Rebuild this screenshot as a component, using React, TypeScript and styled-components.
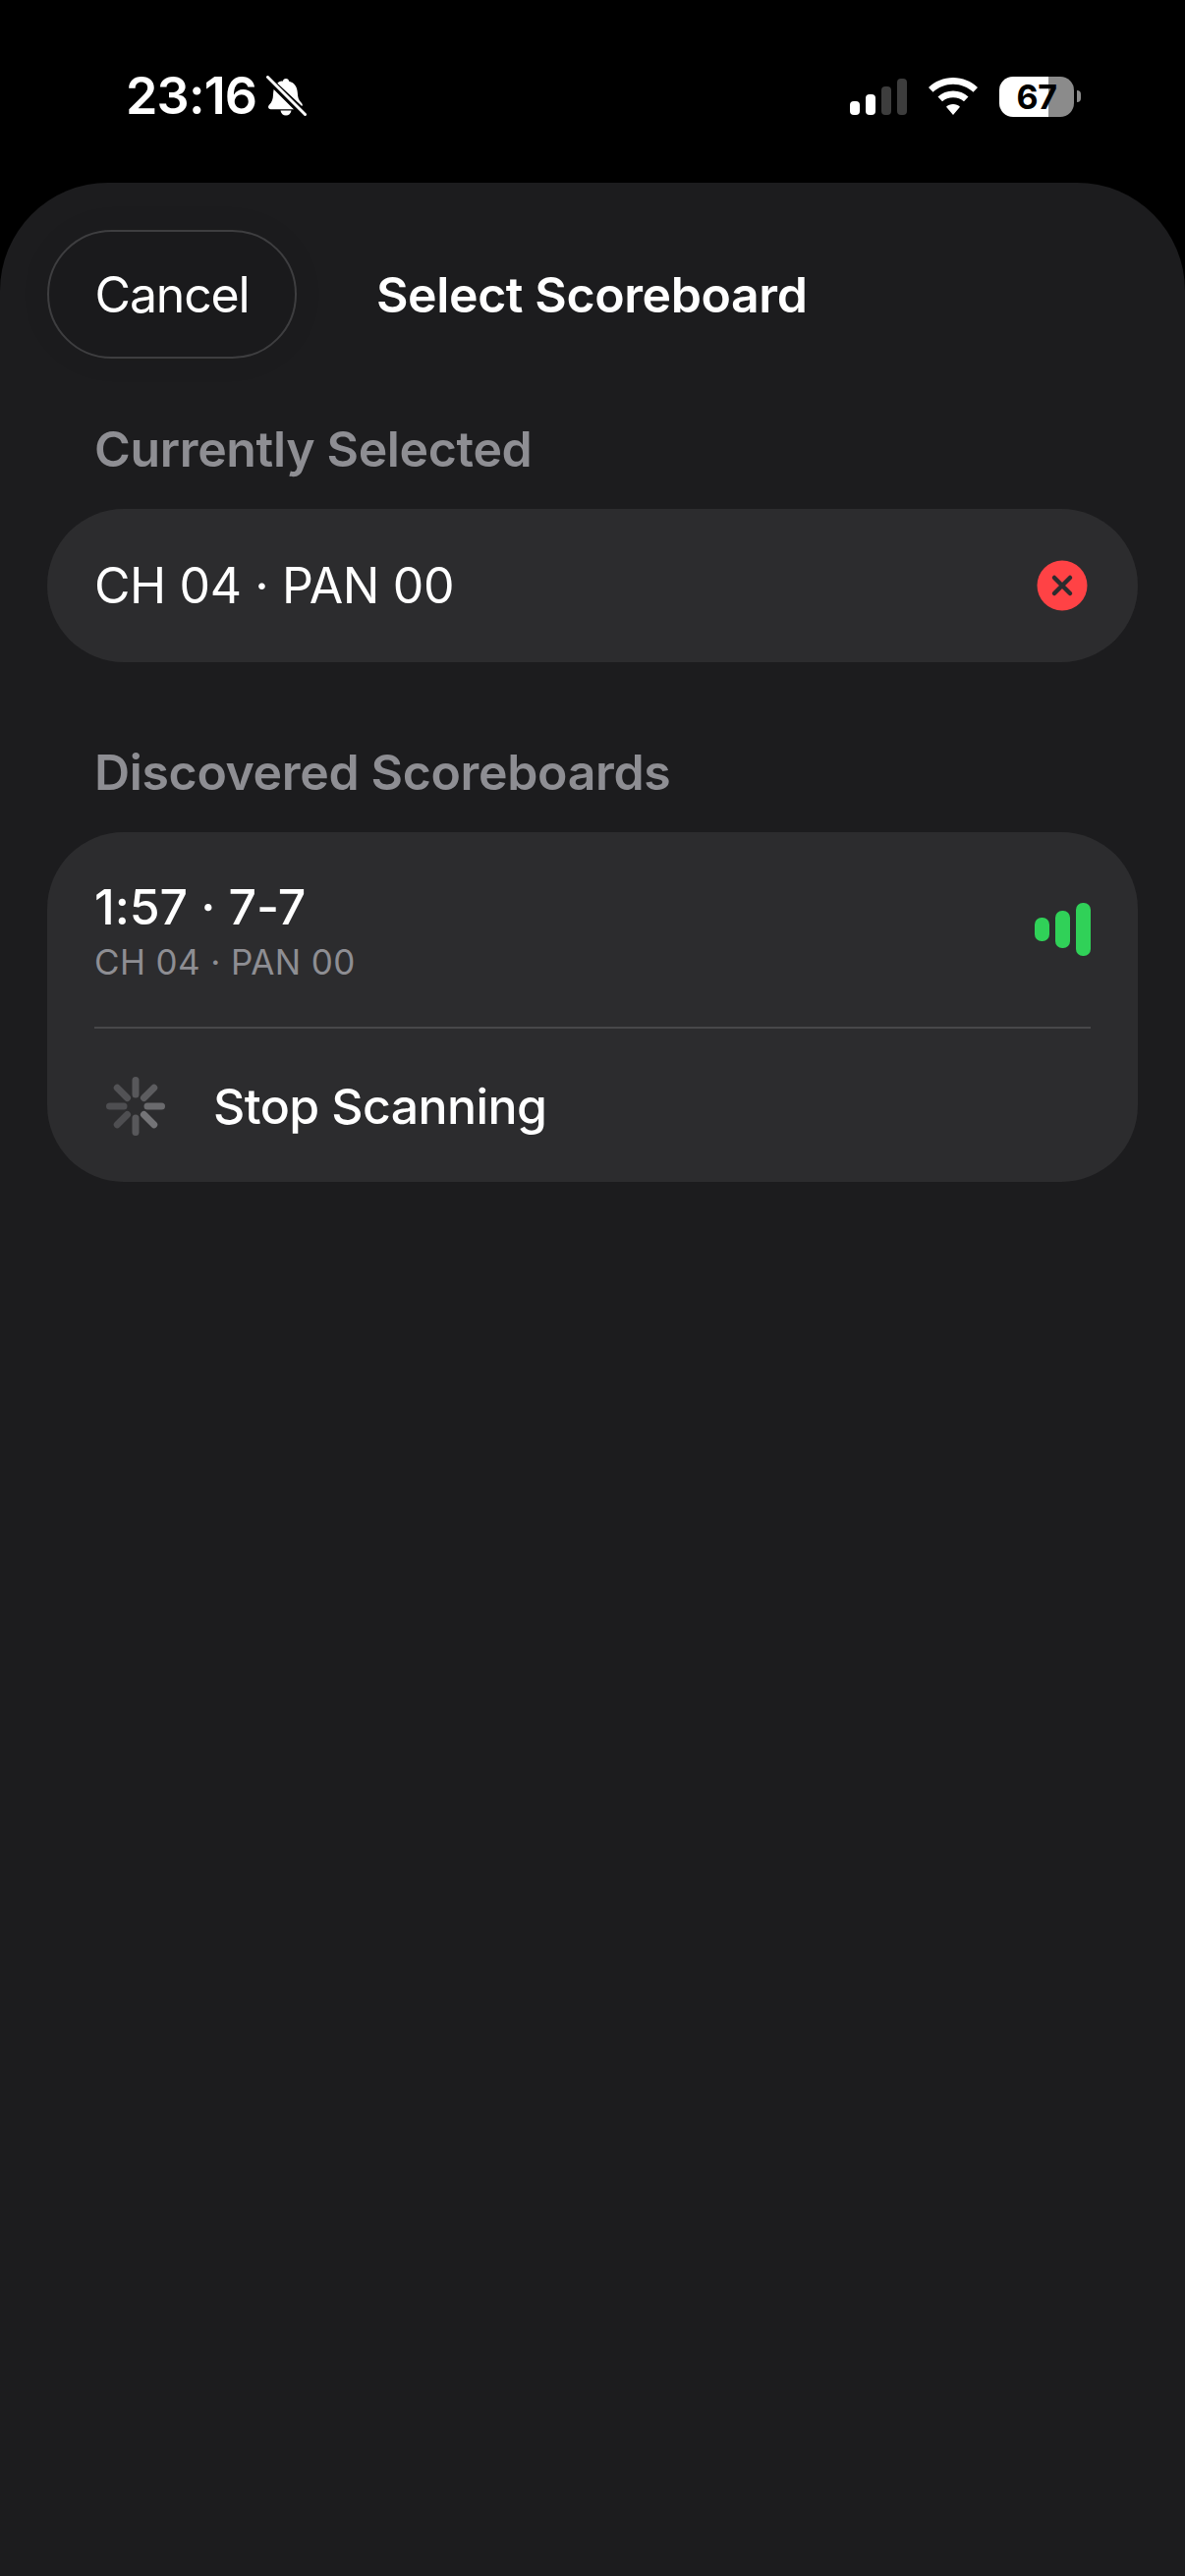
import React, { FC } from "react";
import styled, { createGlobalStyle } from "styled-components";

const GlobalStyle = createGlobalStyle`
  html, body {
    margin: 0;
    padding: 0;
    background: #000;
  }
  * {
    box-sizing: border-box;
  }
`;

const Page = styled.div`
  width: 1206px;
  height: 2622px;
  display: flex;
  flex-direction: column;
  overflow: hidden;
  background: #000;
  color: #fff;
  font-family: Inter, "Noto Sans", "Liberation Sans", sans-serif;
`;

const StatusBar = styled.div`
  height: 186px;
  flex: none;
  display: flex;
  justify-content: space-between;
  align-items: flex-start;
  padding: 70px 106px 0 128px;
`;

const StatusLeft = styled.div`
  display: flex;
  align-items: center;
  gap: 9px;
  height: 56px;
`;

const Clock = styled.span`
  font-size: 52px;
  line-height: 56px;
  font-weight: 600;
  letter-spacing: -0.8px;
`;

const StatusRight = styled.div`
  display: flex;
  align-items: center;
  height: 56px;
`;

const SignalBars = styled.div`
  display: flex;
  align-items: flex-end;
  gap: 6px;
  height: 37px;
  margin-right: 22px;
`;

const SignalBar = styled.span<{ $height: number; $on: boolean }>`
  width: 10px;
  height: ${(p) => p.$height}px;
  border-radius: 4px;
  background: ${(p) => (p.$on ? "#fff" : "#3d3d3d")};
`;

const Battery = styled.div`
  width: 76px;
  height: 41px;
  margin-left: 22px;
  border-radius: 14px;
  overflow: hidden;
  background: linear-gradient(to right, #fff 0 50px, #8b8b8b 50px);
  color: #000;
  font-size: 34px;
  font-weight: 700;
  line-height: 41px;
  text-align: center;
  letter-spacing: -0.5px;
`;

const BatteryCap = styled.span`
  width: 4px;
  height: 12px;
  margin-left: 3px;
  border-radius: 0 6px 6px 0;
  background: #8b8b8b;
`;

const Sheet = styled.div`
  flex: 1;
  display: flex;
  flex-direction: column;
  padding: 48px 48px 0;
  background: #1c1c1e;
  border-radius: 110px 110px 0 0;
`;

const NavBar = styled.div`
  display: flex;
  align-items: center;
  gap: 81px;
  margin-bottom: 62px;
`;

const CancelButton = styled.div`
  width: 254px;
  height: 131px;
  display: flex;
  align-items: center;
  justify-content: center;
  border: 2px solid #3e3e40;
  border-radius: 66px;
  background: #1a1a1c;
  box-shadow: 0 0 30px rgba(0, 0, 0, 0.08);
  font-size: 50px;
  letter-spacing: -1.2px;
`;

const Title = styled.div`
  font-size: 50px;
  font-weight: 600;
  letter-spacing: -0.4px;
`;

const SectionLabel = styled.div`
  height: 60px;
  line-height: 60px;
  padding-left: 48px;
  color: #8e8e93;
  font-size: 50px;
  font-weight: 600;
  letter-spacing: -0.35px;
`;

const Card = styled.div`
  margin-top: 31px;
  border-radius: 78px;
  background: #2c2c2e;
`;

const SelectedCard = styled(Card)`
  height: 156px;
  margin-bottom: 82px;
  display: flex;
  align-items: center;
  justify-content: space-between;
  padding: 0 51px 0 48px;
  font-size: 50px;
  letter-spacing: -0.4px;
`;

const ScoreRow = styled.div`
  height: 198px;
  display: flex;
  align-items: center;
  justify-content: space-between;
  padding: 0 48px;
`;

const ScoreText = styled.div`
  display: flex;
  flex-direction: column;
  gap: 5px;
`;

const ScoreTitle = styled.div`
  font-size: 50px;
  line-height: 60px;
  font-weight: 500;
  letter-spacing: -0.1px;
`;

const ScoreSub = styled.div`
  color: #8e8e93;
  font-size: 35px;
  line-height: 42px;
  letter-spacing: 0.4px;
`;

const Divider = styled.div`
  height: 2px;
  margin: 0 48px;
  background: #48484a;
`;

const ScanRow = styled.div`
  height: 156px;
  display: flex;
  align-items: center;
  gap: 49px;
  padding-left: 60px;
  padding-top: 1px;
  font-size: 50px;
  font-weight: 500;
  letter-spacing: -0.6px;
`;

const GreenBars = styled.div`
  display: flex;
  align-items: center;
  gap: 6px;
`;

const GreenBar = styled.span<{ $height: number }>`
  width: 15px;
  height: ${(p) => p.$height}px;
  border-radius: 7px;
  background: #30d158;
`;

const BellOff: FC = () => (
  <svg width="42" height="42" viewBox="0 0 42 42">
    <path
      fill="#fff"
      d="M21 3c1.800 0 3 1.200 3.200 2.800 5.600 1.400 8.300 5.900 8.600 11.500.2 4.600 1 7.600 4 10.500.6.6 1 1.200 1 2 0 .5-.2 1-.6 1.300L12.300 7.800C14 6 16.500 5 17.800 5.800 18 4.200 19.200 3 21 3zM8.800 13.500 29.500 34.200H5.500c-1.400 0-2.500-1-2.500-2.400 0-.8.4-1.400 1-2 3-2.900 3.800-6 4-10.500.1-2.100.3-4 .8-5.800zM15.500 35.500h11c-.4 3-2.700 5-5.500 5s-5.100-2-5.500-5z"
    />
    <path d="M2 3 39 40" stroke="#000" strokeWidth="6" />
    <path d="M2.500 1.500 40.500 39.500" stroke="#fff" strokeWidth="3" strokeLinecap="round" />
  </svg>
);

const WifiIcon: FC = () => (
  <svg width="50" height="38" viewBox="0 0 50 38">
    <path
      fill="#fff"
      d="M25 0c9.700 0 18.500 3.800 25 10l-4.500 4.800C40 9.800 32.800 6.800 25 6.800S10 9.800 4.500 14.800L0 10C6.500 3.800 15.300 0 25 0zM25 13.500c6 0 11.400 2.300 15.500 6L36 24.300c-2.900-2.600-6.800-4.100-11-4.100s-8.100 1.500-11 4.100l-4.500-4.800c4.100-3.700 9.500-6 15.500-6zM25 27c2.700 0 5.200 1 7 2.700L25 38l-7-8.300C19.800 28 22.300 27 25 27z"
    />
  </svg>
);

const ClearIcon: FC = () => (
  <svg width="52" height="52" viewBox="0 0 52 52">
    <circle cx="26" cy="26" r="25.5" fill="#ff4245" />
    <path d="M18 18 34 34M34 18 18 34" stroke="#2c2c2e" strokeWidth="4.5" strokeLinecap="round" />
  </svg>
);

const spokes = [
  { angle: 0, color: "#58585b" },
  { angle: 45, color: "#5c5c5f" },
  { angle: 90, color: "#6a6a6d" },
  { angle: 135, color: "#747477" },
  { angle: 180, color: "#58585b" },
  { angle: 225, color: "#4e4e51" },
  { angle: 270, color: "#4e4e51" },
  { angle: 315, color: "#525255" },
];

const Spinner: FC = () => (
  <svg width="60" height="60" viewBox="0 0 60 60">
    {spokes.map((s) => (
      <line
        key={s.angle}
        x1="30"
        y1="3.5"
        x2="30"
        y2="18"
        stroke={s.color}
        strokeWidth="7"
        strokeLinecap="round"
        transform={`rotate(${s.angle} 30 30)`}
      />
    ))}
  </svg>
);

const App: FC = () => (
  <>
    <GlobalStyle />
    <Page>
      <StatusBar>
        <StatusLeft>
          <Clock>23:16</Clock>
          <BellOff />
        </StatusLeft>
        <StatusRight>
          <SignalBars>
            <SignalBar $height={14} $on />
            <SignalBar $height={21} $on />
            <SignalBar $height={29} $on={false} />
            <SignalBar $height={37} $on={false} />
          </SignalBars>
          <WifiIcon />
          <Battery>67</Battery>
          <BatteryCap />
        </StatusRight>
      </StatusBar>
      <Sheet>
        <NavBar>
          <CancelButton>Cancel</CancelButton>
          <Title>Select Scoreboard</Title>
        </NavBar>
        <SectionLabel>Currently Selected</SectionLabel>
        <SelectedCard>
          CH 04 · PAN 00
          <ClearIcon />
        </SelectedCard>
        <SectionLabel>Discovered Scoreboards</SectionLabel>
        <Card>
          <ScoreRow>
            <ScoreText>
              <ScoreTitle>1:57 · 7-7</ScoreTitle>
              <ScoreSub>CH 04 · PAN 00</ScoreSub>
            </ScoreText>
            <GreenBars>
              <GreenBar $height={24} />
              <GreenBar $height={38} />
              <GreenBar $height={54} />
            </GreenBars>
          </ScoreRow>
          <Divider />
          <ScanRow>
            <Spinner />
            Stop Scanning
          </ScanRow>
        </Card>
      </Sheet>
    </Page>
  </>
);

export default App;
